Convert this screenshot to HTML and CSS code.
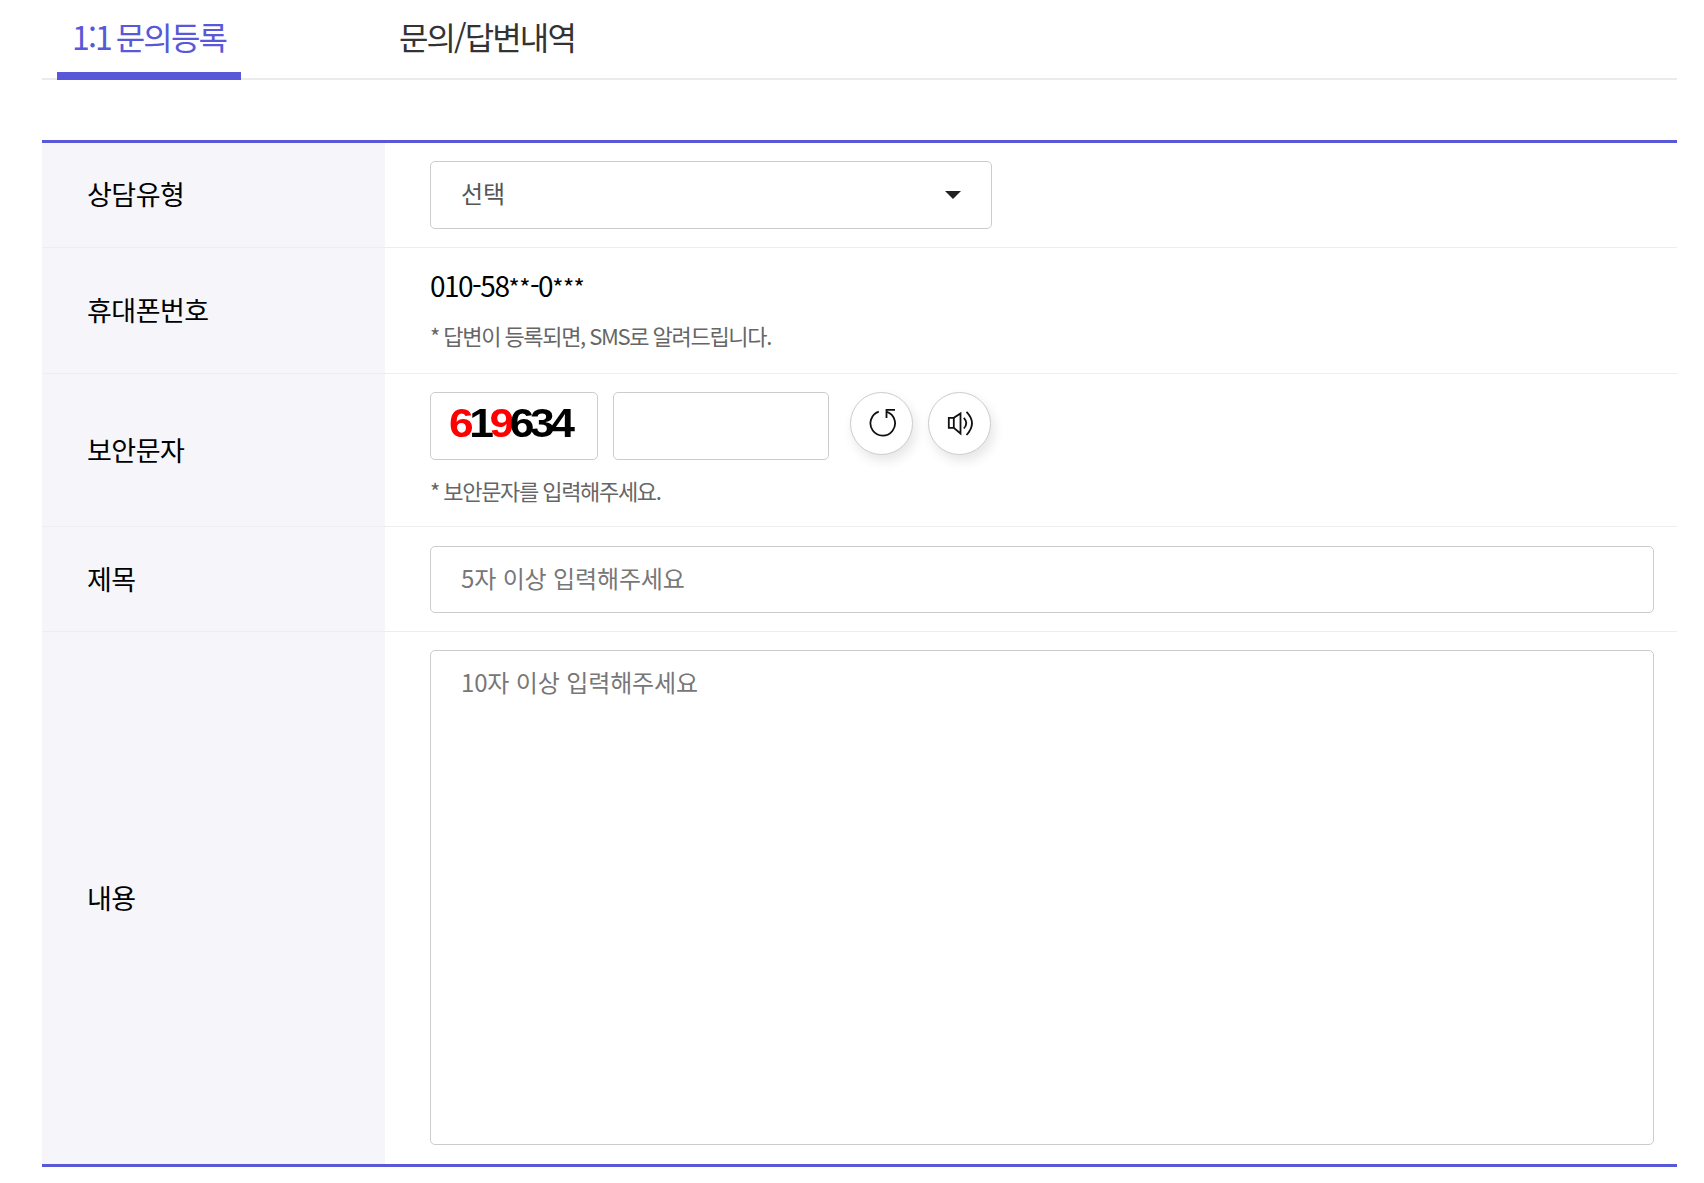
FILE: index.html
```html
<!DOCTYPE html>
<html lang="ko">
<head>
<meta charset="utf-8">
<title>1:1 문의등록</title>
<link rel="stylesheet" href="styles.css">
</head>
<body>
<main class="page">
  <nav class="tabs">
    <a class="tab tab-active">1:1 문의등록</a>
    <a class="tab">문의/답변내역</a>
  </nav>
  <form class="form">
    <div class="row row-type">
      <div class="label">상담유형</div>
      <div class="cell">
        <div class="select"><span class="select-text">선택</span><i class="caret"></i></div>
      </div>
    </div>
    <div class="row row-phone">
      <div class="label">휴대폰번호</div>
      <div class="cell">
        <div class="phone">010-58<span class="mask">**</span>-0<span class="mask">***</span></div>
        <p class="note note-phone">* 답변이 등록되면, SMS로 알려드립니다.</p>
      </div>
    </div>
    <div class="row row-captcha">
      <div class="label">보안문자</div>
      <div class="cell">
        <div class="captcha">
          <div class="captcha-img"><div class="captcha-code"><b class="red">6</b><b>1</b><b class="red">9</b><b>634</b></div></div>
          <input class="captcha-input field" type="text">
          <button class="round round-first" type="button" aria-label="새로고침">
            <svg width="30" height="30" viewBox="0 0 30 30" fill="none" stroke="#111" stroke-width="1.8"><path d="M11.8 3.7A12.3 12.3 0 1 0 20 3.8"/><path d="M28 1.8H19.5V10"/></svg>
          </button>
          <button class="round" type="button" aria-label="음성듣기">
            <svg width="30" height="30" viewBox="0 0 30 30" fill="none" stroke="#111" stroke-width="1.8"><path d="M3.8 9.8H8.8L15.5 5.5V25.5L8.8 19.8H3.8Z"/><path d="M8.8 9.8V19.8"/><path d="M18.8 9.8Q23.8 15 18.8 20.5"/><path d="M21.5 3.8Q32.5 15 21.5 27"/></svg>
          </button>
        </div>
        <p class="note note-captcha">* 보안문자를 입력해주세요.</p>
      </div>
    </div>
    <div class="row row-title">
      <div class="label">제목</div>
      <div class="cell">
        <input class="field text-field" type="text" placeholder="5자 이상 입력해주세요">
      </div>
    </div>
    <div class="row row-body">
      <div class="label">내용</div>
      <div class="cell">
        <textarea class="field text-area" placeholder="10자 이상 입력해주세요"></textarea>
      </div>
    </div>
  </form>
</main>
</body>
</html>
```
FILE: styles.css
```css
* { box-sizing: border-box; }
html, body { margin: 0; padding: 0; background: #fff; }
body {
  font-family: "Noto Sans CJK KR", "Noto Sans", sans-serif;
  color: #000;
}
.page { width: 1635px; margin-left: 42px; }

.tabs {
  display: flex;
  height: 80px;
  padding-left: 15px;
  border-bottom: 2px solid #ebebeb;
}
.tab {
  height: 80px;
  font-size: 32px;
  line-height: 72px;
  letter-spacing: -1.9px;
  color: #333;
  text-align: center;
}
.tab:first-child { width: 184px; word-spacing: -2px; }
.tab:last-child { margin-left: 158px; }
.tab-active {
  color: #5858d8;
  border-bottom: 8px solid #5858d8;
}

.form {
  margin-top: 60px;
  border-top: 3px solid #5858d8;
  border-bottom: 3px solid #5858d8;
}
.row {
  display: flex;
  border-bottom: 1px solid #eeeeee;
}
.row:last-child { border-bottom: 0; }
.label {
  width: 343px;
  flex: none;
  display: flex;
  align-items: center;
  padding: 0 0 3px 45px;
  background: #f5f5fa;
  font-size: 27px;
  letter-spacing: -0.5px;
}
.row-captcha .label, .row-title .label, .row-body .label { padding-bottom: 1px; }
.cell {
  flex: 1;
  padding: 18px 23px 18px 45px;
}
.field {
  display: block;
  border: 1px solid #cccccc;
  border-radius: 5px;
  background: #fff;
  font-family: inherit;
  outline: none;
}
.field::placeholder { color: #777; opacity: 1; }

.select {
  width: 562px;
  height: 68px;
  display: flex;
  align-items: center;
  justify-content: space-between;
  padding: 0 30px 0 30px;
  border: 1px solid #cccccc;
  border-radius: 5px;
  font-size: 24px;
  color: #555;
}
.select-text { padding-bottom: 6px; }
.caret {
  width: 0;
  height: 0;
  border-left: 8px solid transparent;
  border-right: 8px solid transparent;
  border-top: 8px solid #222;
}

.row-phone .cell { padding-top: 17px; padding-bottom: 22px; }
.phone {
  font-size: 28px;
  line-height: 40px;
  letter-spacing: -1.5px;
}
.mask {
  font-size: 24px;
  letter-spacing: -0.5px;
}
.note {
  margin: 0;
  font-size: 22px;
  line-height: 32px;
  letter-spacing: -1.32px;
  word-spacing: -0.5px;
  color: #666;
}
.note-phone { margin-top: 12px; }
.note-captcha { margin-top: 14px; }
.row-captcha .cell { padding-bottom: 20px; }

.captcha { display: flex; align-items: flex-start; }
.captcha-img {
  width: 168px;
  height: 68px;
  border: 1px solid #cccccc;
  border-radius: 5px;
  padding-left: 18px;
  overflow: hidden;
}
.captcha-code {
  font-family: "Liberation Sans", sans-serif;
  font-size: 40px;
  line-height: 60px;
  letter-spacing: -4px;
  color: #000;
  white-space: nowrap;
  transform: scaleX(1.11);
  transform-origin: left center;
  filter: blur(0.4px);
}
.captcha-code b { font-weight: 700; }
.captcha-code .red { color: #f00; }
.captcha-input { width: 216px; height: 68px; margin-left: 15px; }
.round {
  width: 63px;
  height: 63px;
  margin-left: 15px;
  padding: 0 0 2px;
  display: flex;
  align-items: center;
  justify-content: center;
  border: 1px solid #cccccc;
  border-radius: 50%;
  background: #fff;
  box-shadow: 3px 6px 12px rgba(0, 0, 0, 0.1);
}
.round-first { margin-left: 21px; }

.row-title .cell { padding-top: 19px; padding-bottom: 18px; }
.row-body .cell { padding-bottom: 19px; }
.text-field {
  width: 100%;
  height: 67px;
  padding: 0 30px 4px;
  font-size: 24px;
  letter-spacing: -0.15px;
}
.text-area {
  width: 100%;
  height: 495px;
  padding: 13px 30px;
  font-size: 24px;
  line-height: 36px;
  letter-spacing: -0.15px;
  resize: none;
}
```
